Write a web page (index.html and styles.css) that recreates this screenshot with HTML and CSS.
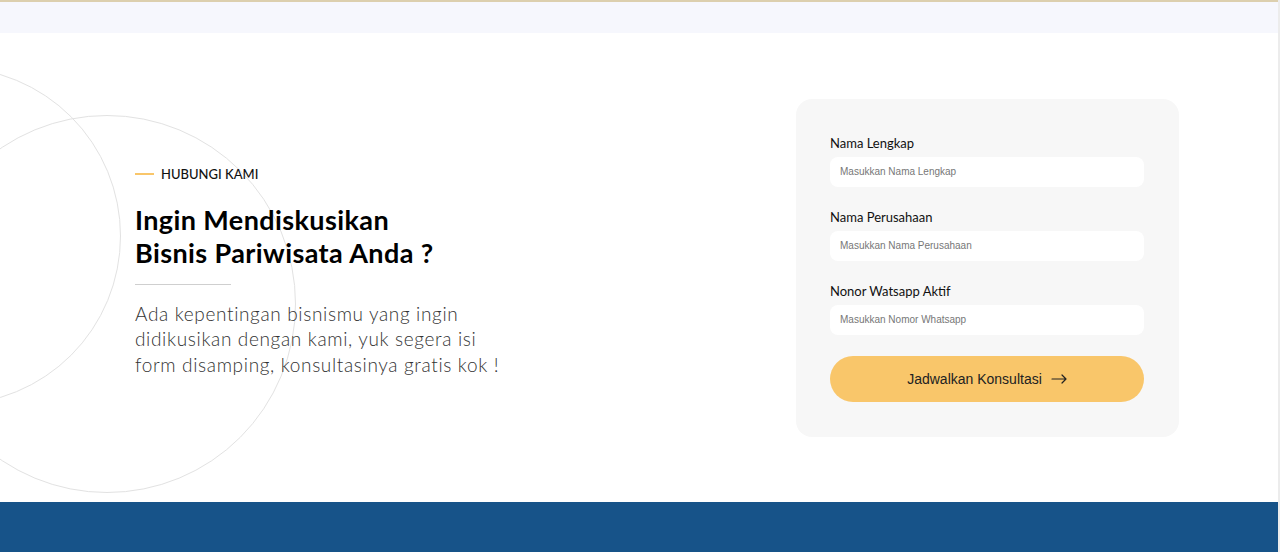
FILE: index.html
```html
<!DOCTYPE html>
<html lang="id">
<head>
<meta charset="utf-8">
<title>Hubungi Kami</title>
<link rel="stylesheet" href="styles.css">
</head>
<body>
<div class="page">
  <div class="topbar"></div>
  <section class="contact">
    <div class="circle circle-a"></div>
    <div class="circle circle-b"></div>
    <div class="intro">
      <div class="eyebrow"><span class="dash"></span>HUBUNGI KAMI</div>
      <h2 class="title">Ingin Mendiskusikan<br>Bisnis Pariwisata Anda ?</h2>
      <div class="rule"></div>
      <p class="lead">Ada kepentingan bisnismu yang ingin didikusikan dengan kami, yuk segera isi form disamping, konsultasinya gratis kok !</p>
    </div>
    <form class="card">
      <label class="field">
        <span class="label">Nama Lengkap</span>
        <input class="input" type="text" placeholder="Masukkan Nama Lengkap">
      </label>
      <label class="field">
        <span class="label">Nama Perusahaan</span>
        <input class="input" type="text" placeholder="Masukkan Nama Perusahaan">
      </label>
      <label class="field">
        <span class="label">Nonor Watsapp Aktif</span>
        <input class="input" type="text" placeholder="Masukkan Nomor Whatsapp">
      </label>
      <button class="btn" type="button">Jadwalkan Konsultasi
        <svg class="arrow" width="16" height="10" viewBox="0 0 16 10" fill="none" stroke="#222" stroke-width="1.2" stroke-linecap="round" stroke-linejoin="round"><path d="M1 5h14M11 1l4 4-4 4"/></svg>
      </button>
    </form>
  </section>
  <footer class="footer"></footer>
</div>
</body>
</html>
```
FILE: styles.css
```css
* { box-sizing: border-box; }
html, body { margin: 0; padding: 0; }
body {
  font-family: "Lato", "Noto Sans", sans-serif;
  color: #111;
  background: #fff;
  overflow: hidden;
}
.page {
  width: 1280px;
  height: 552px;
  border-right: 2px solid #ececec;
  overflow: hidden;
}
.topbar {
  height: 33px;
  background: #f6f7fd;
  border-top: 2px solid #dccfae;
}
.contact {
  position: relative;
  height: 469px;
  display: flex;
  align-items: center;
  justify-content: space-between;
  padding: 0 99px 0 135px;
  overflow: hidden;
}
.circle {
  position: absolute;
  border: 1px solid #e2e2e2;
  border-radius: 50%;
  pointer-events: none;
}
.circle-a {
  width: 338px; height: 338px;
  left: -217px; top: 34px;
}
.circle-b {
  width: 378px; height: 378px;
  left: -82px; top: 82px;
}
.intro {
  position: relative;
  width: 400px;
  margin-top: 8px;
}
.eyebrow {
  display: flex;
  align-items: center;
  font-size: 13px;
  font-weight: 500;
  letter-spacing: 0px;
  color: #111;
}
.dash {
  display: inline-block;
  width: 19px;
  height: 2px;
  background: #f9c66a;
  margin-right: 7px;
}
.title {
  margin: 21px 0 0;
  font-size: 27px;
  font-weight: 700;
  line-height: 33px;
  color: #000;
  letter-spacing: 0.4px;
}
.rule {
  width: 96px;
  height: 1px;
  background: #cfcfcf;
  margin-top: 15px;
}
.lead {
  margin: 16px 0 0;
  font-size: 19px;
  font-weight: 300;
  line-height: 25.5px;
  letter-spacing: 0.65px;
  color: #333;
  width: 372px;
}
.card {
  position: relative;
  width: 383px;
  background: #f7f7f7;
  border-radius: 16px;
  padding: 36px 35px 35px 34px;
  display: flex;
  flex-direction: column;
}
.field {
  display: flex;
  flex-direction: column;
  margin-bottom: 22px;
}
.label {
  font-size: 13px;
  line-height: 16px;
  color: #111;
  margin-bottom: 6px;
}
.input {
  height: 30px;
  border: none;
  border-radius: 8px;
  background: #fff;
  padding: 0 10px;
  font-family: "Liberation Sans", Arial, sans-serif;
  font-size: 10px;
  outline: none;
}
.input::placeholder { color: #777; }
.btn {
  margin-top: -1px;
  height: 46px;
  border: none;
  border-radius: 23px;
  background: #f9c66a;
  font-family: "Liberation Sans", Arial, sans-serif;
  font-size: 14px;
  color: #222;
  display: flex;
  align-items: center;
  justify-content: center;
  gap: 9px;
  cursor: pointer;
}
.footer {
  height: 50px;
  background: #175389;
}
```
